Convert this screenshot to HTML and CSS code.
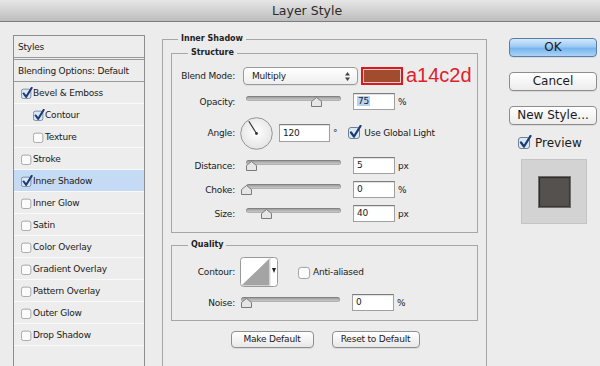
FILE: index.html
```html
<!DOCTYPE html>
<html>
<head>
<meta charset="utf-8">
<title>Layer Style</title>
<link rel="stylesheet" href="styles.css">
</head>
<body>
<div class="titlebar">Layer Style</div>
<div class="dialog">
  <div class="sidebar">
    <div class="item styles">Styles</div>
    <div class="item head">Blending Options: Default</div>
    <div class="item"><svg class="cb" viewBox="0 0 14 14"><rect x="0.5" y="2.5" width="11" height="11" rx="2.5" fill="#dde8f6" stroke="#6f7f95"/><path d="M3 7.5 L6 11.5 L12.5 1" fill="none" stroke="#1c3c78" stroke-width="2.3" stroke-linecap="round" stroke-linejoin="round"/></svg>Bevel &amp; Emboss</div>
    <div class="item sub"><svg class="cb" viewBox="0 0 14 14"><rect x="0.5" y="2.5" width="11" height="11" rx="2.5" fill="#dde8f6" stroke="#6f7f95"/><path d="M3 7.5 L6 11.5 L12.5 1" fill="none" stroke="#1c3c78" stroke-width="2.3" stroke-linecap="round" stroke-linejoin="round"/></svg>Contour</div>
    <div class="item sub"><svg class="cb" viewBox="0 0 14 14"><rect x="0.5" y="2.5" width="11" height="11" rx="2.5" fill="#fbfbfb" stroke="#9a9a9a"/></svg>Texture</div>
    <div class="item"><svg class="cb" viewBox="0 0 14 14"><rect x="0.5" y="2.5" width="11" height="11" rx="2.5" fill="#fbfbfb" stroke="#9a9a9a"/></svg>Stroke</div>
    <div class="item sel"><svg class="cb" viewBox="0 0 14 14"><rect x="0.5" y="2.5" width="11" height="11" rx="2.5" fill="#dde8f6" stroke="#6f7f95"/><path d="M3 7.5 L6 11.5 L12.5 1" fill="none" stroke="#1c3c78" stroke-width="2.3" stroke-linecap="round" stroke-linejoin="round"/></svg>Inner Shadow</div>
    <div class="item"><svg class="cb" viewBox="0 0 14 14"><rect x="0.5" y="2.5" width="11" height="11" rx="2.5" fill="#fbfbfb" stroke="#9a9a9a"/></svg>Inner Glow</div>
    <div class="item"><svg class="cb" viewBox="0 0 14 14"><rect x="0.5" y="2.5" width="11" height="11" rx="2.5" fill="#fbfbfb" stroke="#9a9a9a"/></svg>Satin</div>
    <div class="item"><svg class="cb" viewBox="0 0 14 14"><rect x="0.5" y="2.5" width="11" height="11" rx="2.5" fill="#fbfbfb" stroke="#9a9a9a"/></svg>Color Overlay</div>
    <div class="item"><svg class="cb" viewBox="0 0 14 14"><rect x="0.5" y="2.5" width="11" height="11" rx="2.5" fill="#fbfbfb" stroke="#9a9a9a"/></svg>Gradient Overlay</div>
    <div class="item"><svg class="cb" viewBox="0 0 14 14"><rect x="0.5" y="2.5" width="11" height="11" rx="2.5" fill="#fbfbfb" stroke="#9a9a9a"/></svg>Pattern Overlay</div>
    <div class="item"><svg class="cb" viewBox="0 0 14 14"><rect x="0.5" y="2.5" width="11" height="11" rx="2.5" fill="#fbfbfb" stroke="#9a9a9a"/></svg>Outer Glow</div>
    <div class="item"><svg class="cb" viewBox="0 0 14 14"><rect x="0.5" y="2.5" width="11" height="11" rx="2.5" fill="#fbfbfb" stroke="#9a9a9a"/></svg>Drop Shadow</div>
  </div>

  <div class="main">
    <div class="group outer">
      <div class="legend">Inner Shadow</div>
      <div class="group structure">
        <div class="legend legend-in">Structure</div>

        <div class="row r-blend">
          <span class="lbl">Blend Mode:</span>
          <div class="select">Multiply<svg class="updown" viewBox="0 0 5 9"><path d="M0 3.5 L2.5 0 L5 3.5 Z M0 5.5 L2.5 9 L5 5.5 Z" fill="#444"/></svg></div>
          <div class="swatch"><div class="swatch-in"></div></div>
          <span class="hex">a14c2d</span>
        </div>

        <div class="row r-opacity">
          <span class="lbl">Opacity:</span>
          <div class="slider"><div class="track"></div><svg class="thumb" style="left:65px" viewBox="0 0 11 10"><path d="M0.5 9.5 L0.5 4.5 L5.5 0.5 L10.5 4.5 L10.5 9.5 Z" fill="#e6e6e6" stroke="#7a7a7a"/></svg></div>
          <div class="num"><span class="hl">75</span></div><span class="unit">%</span>
        </div>

        <div class="row r-angle">
          <span class="lbl">Angle:</span>
          <svg class="dial" viewBox="0 0 33 33"><defs><radialGradient id="dg" cx="0.5" cy="0.45" r="0.6"><stop offset="0" stop-color="#ffffff"/><stop offset="1" stop-color="#e2e2e2"/></radialGradient></defs><circle cx="16.5" cy="16.5" r="15.8" fill="url(#dg)" stroke="#8c8c8c" stroke-width="0.9"/><line x1="16.5" y1="16.5" x2="8.8" y2="4.2" stroke="#333" stroke-width="1.2"/><circle cx="16.5" cy="16.5" r="1.4" fill="#333"/></svg>
          <div class="num num-wide">120</div><span class="unit deg">°</span>
          <svg class="cb cb-big" viewBox="0 0 14 14"><rect x="0.5" y="2.5" width="11" height="11" rx="2.5" fill="#dde8f6" stroke="#6f7f95"/><path d="M3 7.5 L6 11.5 L12.5 1" fill="none" stroke="#1c3c78" stroke-width="2.3" stroke-linecap="round" stroke-linejoin="round"/></svg>
          <span class="cb-label">Use Global Light</span>
        </div>

        <div class="row r-distance">
          <span class="lbl">Distance:</span>
          <div class="slider"><div class="track"></div><svg class="thumb" style="left:0px" viewBox="0 0 11 10"><path d="M0.5 9.5 L0.5 4.5 L5.5 0.5 L10.5 4.5 L10.5 9.5 Z" fill="#e6e6e6" stroke="#7a7a7a"/></svg></div>
          <div class="num">5</div><span class="unit">px</span>
        </div>

        <div class="row r-choke">
          <span class="lbl">Choke:</span>
          <div class="slider"><div class="track"></div><svg class="thumb" style="left:-5px" viewBox="0 0 11 10"><path d="M0.5 9.5 L0.5 4.5 L5.5 0.5 L10.5 4.5 L10.5 9.5 Z" fill="#e6e6e6" stroke="#7a7a7a"/></svg></div>
          <div class="num">0</div><span class="unit">%</span>
        </div>

        <div class="row r-size">
          <span class="lbl">Size:</span>
          <div class="slider"><div class="track"></div><svg class="thumb" style="left:15px" viewBox="0 0 11 10"><path d="M0.5 9.5 L0.5 4.5 L5.5 0.5 L10.5 4.5 L10.5 9.5 Z" fill="#e6e6e6" stroke="#7a7a7a"/></svg></div>
          <div class="num">40</div><span class="unit">px</span>
        </div>
      </div>

      <div class="group quality">
        <div class="legend legend-in">Quality</div>
        <div class="row r-contour">
          <span class="lbl lbl-q">Contour:</span>
          <svg class="contour" viewBox="0 0 38 30"><rect x="0.5" y="0.5" width="37" height="29" rx="3" fill="#ffffff" stroke="#9a9a9a"/><path d="M1.5 28.5 L29.5 1.5 L29.5 28.5 Z" fill="#a4a4a4"/><line x1="30" y1="1" x2="30" y2="29" stroke="#d6d6d6"/><path d="M32 11 L36 11 L34 16 Z" fill="#222"/></svg>
          <svg class="cb cb-aa" viewBox="0 0 14 14"><rect x="0.5" y="1.5" width="12" height="12" rx="3" fill="#fbfbfb" stroke="#9a9a9a"/></svg>
          <span class="cb-label">Anti-aliased</span>
        </div>
        <div class="row r-noise">
          <span class="lbl lbl-q">Noise:</span>
          <div class="slider slider-q"><div class="track"></div><svg class="thumb" style="left:0px" viewBox="0 0 11 10"><path d="M0.5 9.5 L0.5 4.5 L5.5 0.5 L10.5 4.5 L10.5 9.5 Z" fill="#e6e6e6" stroke="#7a7a7a"/></svg></div>
          <div class="num">0</div><span class="unit">%</span>
        </div>
      </div>

      <div class="btnrow">
        <div class="sbtn sbtn-make">Make Default</div>
        <div class="sbtn sbtn-reset">Reset to Default</div>
      </div>
    </div>
  </div>

  <div class="side">
    <div class="btn ok">OK</div>
    <div class="btn">Cancel</div>
    <div class="btn">New Style...</div>
    <div class="preview-row">
      <svg class="cb cb-pv" viewBox="0 0 14 14"><rect x="0.5" y="2.5" width="11" height="11" rx="2.5" fill="#dde8f6" stroke="#6f7f95"/><path d="M3 7.5 L6 11.5 L12.5 1" fill="none" stroke="#1c3c78" stroke-width="2.3" stroke-linecap="round" stroke-linejoin="round"/></svg>
      <span>Preview</span>
    </div>
    <div class="pv"><div class="pv-sq"></div></div>
  </div>
</div>
</body>
</html>
```

FILE: styles.css
```css
* { box-sizing: border-box; }
html, body { margin: 0; padding: 0; }
body {
  width: 600px;
  height: 366px;
  overflow: hidden;
  background: #ececec;
  font-family: "DejaVu Sans", "Liberation Sans", sans-serif;
  font-size: 9px;
  letter-spacing: -0.2px;
  color: #1a1a1a;
}

.titlebar {
  height: 22px;
  border-bottom: 1px solid #7d7d7d;
  background: linear-gradient(#e6e6e6, #bdbdbd);
  text-align: center;
  font-size: 12.5px;
  letter-spacing: 0;
  line-height: 21px;
  color: #2b2b2b;
  padding-left: 14px;
}

.dialog {
  display: flex;
  align-items: flex-start;
  padding-left: 13px;
}

/* sidebar */
.sidebar {
  margin-top: 13px;
  width: 132px;
  height: 345px;
  border: 1px solid #8e8e8e;
  background: #ededed;
  flex: none;
}
.item {
  height: 22px;
  border-bottom: 1px solid #fafafa;
  display: flex;
  align-items: center;
  padding-left: 7px;
  white-space: nowrap;
}
.item.styles {
  height: 24px;
  padding-left: 4px;
  border-bottom: 3px double #9a9a9a;
}
.item.head {
  padding-left: 4px;
  border-bottom-color: #9a9a9a;
}
.item.sub { padding-left: 19px; }
.item.sel { background: #c5daf4; }
.cb {
  width: 12px;
  height: 12px;
  flex: none;
  display: block;
}

/* main */
.main {
  margin-left: 17px;
  margin-top: 17px;
  flex: none;
}
.group {
  border: 1px solid #a6a6a6;
}
.outer {
  width: 325px;
  height: 345px;
  padding: 0 7px 0 8px;
}
.legend {
  display: block;
  width: max-content;
  height: 12px;
  line-height: 12px;
  margin: -7px 0 0 7px;
  padding: 0 3px;
  background: #ececec;
  font-weight: bold;
  font-size: 8px;
  letter-spacing: 0;
  color: #222;
}
.legend-in { margin-left: 16px; }

.structure {
  width: 307px;
  margin-top: 8px;
  padding-bottom: 10px;
}
.quality {
  width: 307px;
  margin-top: 12px;
  padding-bottom: 9px;
}

.row {
  display: flex;
  align-items: center;
  white-space: nowrap;
}
.lbl {
  width: 63px;
  text-align: right;
  margin-right: 8px;
  flex: none;
}
.lbl-q { margin-right: 5px; }

.r-blend { margin-top: 8px; height: 18px; }
.r-opacity { margin-top: 8px; height: 17px; }
.r-angle { margin-top: 7px; height: 32px; }
.r-distance { margin-top: 8px; height: 17px; }
.r-choke { margin-top: 7px; height: 17px; }
.r-size { margin-top: 7px; height: 17px; }
.r-contour { margin-top: 6px; height: 30px; }
.r-noise { margin-top: 7px; height: 17px; }

.select {
  width: 115px;
  height: 18px;
  border: 1px solid #9a9a9a;
  border-radius: 4px;
  background: linear-gradient(#ffffff, #eeeeee);
  display: flex;
  align-items: center;
  padding-left: 8px;
  padding-right: 7px;
  box-shadow: 0 1px 0 rgba(0,0,0,0.06);
}
.updown {
  width: 5px;
  height: 9px;
  margin-left: auto;
}
.swatch {
  width: 42px;
  height: 18px;
  margin-left: 3px;
  border: 2px solid #e0151d;
  padding: 1px;
  background: #d9d2cf;
}
.swatch-in {
  width: 100%;
  height: 100%;
  background: #a14c2d;
}
.hex {
  margin-left: 3px;
  font-family: "Liberation Sans", Arial, sans-serif;
  font-size: 20px;
  letter-spacing: 0;
  line-height: 18px;
  color: #e0202a;
  margin-top: -3px;
}

.slider {
  width: 98px;
  height: 17px;
  padding-top: 3px;
  padding-left: 3px;
  position: relative;
  flex: none;
}
.slider-q {
  width: 100px;
  padding-left: 1px;
}
.track {
  height: 5px;
  border-radius: 3px;
  background: linear-gradient(#8c8c8c, #b9b9b9 55%, #d0d0d0);
  box-shadow: inset 0 0 0 1px rgba(0,0,0,0.12);
}
.slider .thumb {
  position: absolute;
  top: 4px;
  margin-left: 3px;
  width: 11px;
  height: 10px;
}
.slider-q .thumb { margin-left: 1px; }

.num {
  width: 42px;
  height: 17px;
  margin-left: 12px;
  border: 1px solid #a0a0a0;
  border-top-color: #7c7c7c;
  background: #ffffff;
  box-shadow: inset 0 1px 1px rgba(0,0,0,0.12);
  padding-left: 3px;
  line-height: 15px;
  flex: none;
}
.hl { background: #b6d3f4; padding: 0 1px; }
.unit { margin-left: 3px; }

.dial {
  width: 33px;
  height: 33px;
  margin-left: -3px;
  flex: none;
}
.num-wide {
  width: 51px;
  height: 18px;
  margin-left: 6px;
  line-height: 16px;
}
.deg { margin-left: 3px; margin-right: 11px; }
.cb-big { width: 14px; height: 14px; margin-top: -2px; }
.cb-label { margin-left: 2px; }

.contour {
  width: 38px;
  height: 30px;
  flex: none;
}
.cb-aa {
  width: 13px;
  height: 13px;
  margin-left: 20px;
}

.btnrow {
  display: flex;
  justify-content: center;
  gap: 18px;
  margin-top: 10px;
}
.sbtn {
  height: 17px;
  border: 1px solid #8f8f8f;
  border-radius: 4px;
  background: linear-gradient(#ffffff, #e8e8e8);
  text-align: center;
  line-height: 15px;
  box-shadow: 0 1px 0 rgba(0,0,0,0.08);
}
.sbtn-make { width: 83px; }
.sbtn-reset { width: 88px; }

/* right side */
.side {
  margin-left: 22px;
  margin-top: 16px;
  width: 88px;
  flex: none;
  font-size: 12px;
  letter-spacing: 0;
}
.btn {
  height: 19px;
  margin-bottom: 15px;
  border: 1px solid #8d8d8d;
  border-radius: 4px;
  background: linear-gradient(#ffffff, #ececec);
  text-align: center;
  line-height: 17px;
  color: #1a1a1a;
  box-shadow: 0 1px 0 rgba(0,0,0,0.08);
}
.btn.ok {
  border-color: #5a7ca8;
  background: linear-gradient(#d3e8fc, #9ccaf4 45%, #78b4ec 55%, #a9d4f8);
}
.preview-row {
  display: flex;
  align-items: center;
  height: 15px;
  margin-top: -5px;
  padding-left: 9px;
}
.cb-pv { width: 14px; height: 14px; margin-top: -2px; }
.preview-row span { margin-left: 3px; }
.pv {
  width: 66px;
  height: 65px;
  margin-top: 9px;
  margin-left: 12px;
  background: #d3d3d3;
  border: 1px solid #c4c4c4;
  display: flex;
  align-items: center;
  justify-content: center;
}
.pv-sq {
  width: 31px;
  height: 30px;
  background: #54514f;
  box-shadow: inset 1px 1px 1px #2c2a29, inset -1px -1px 1px #3a3837, 0 0 0 1px #6e6b69;
}
```
